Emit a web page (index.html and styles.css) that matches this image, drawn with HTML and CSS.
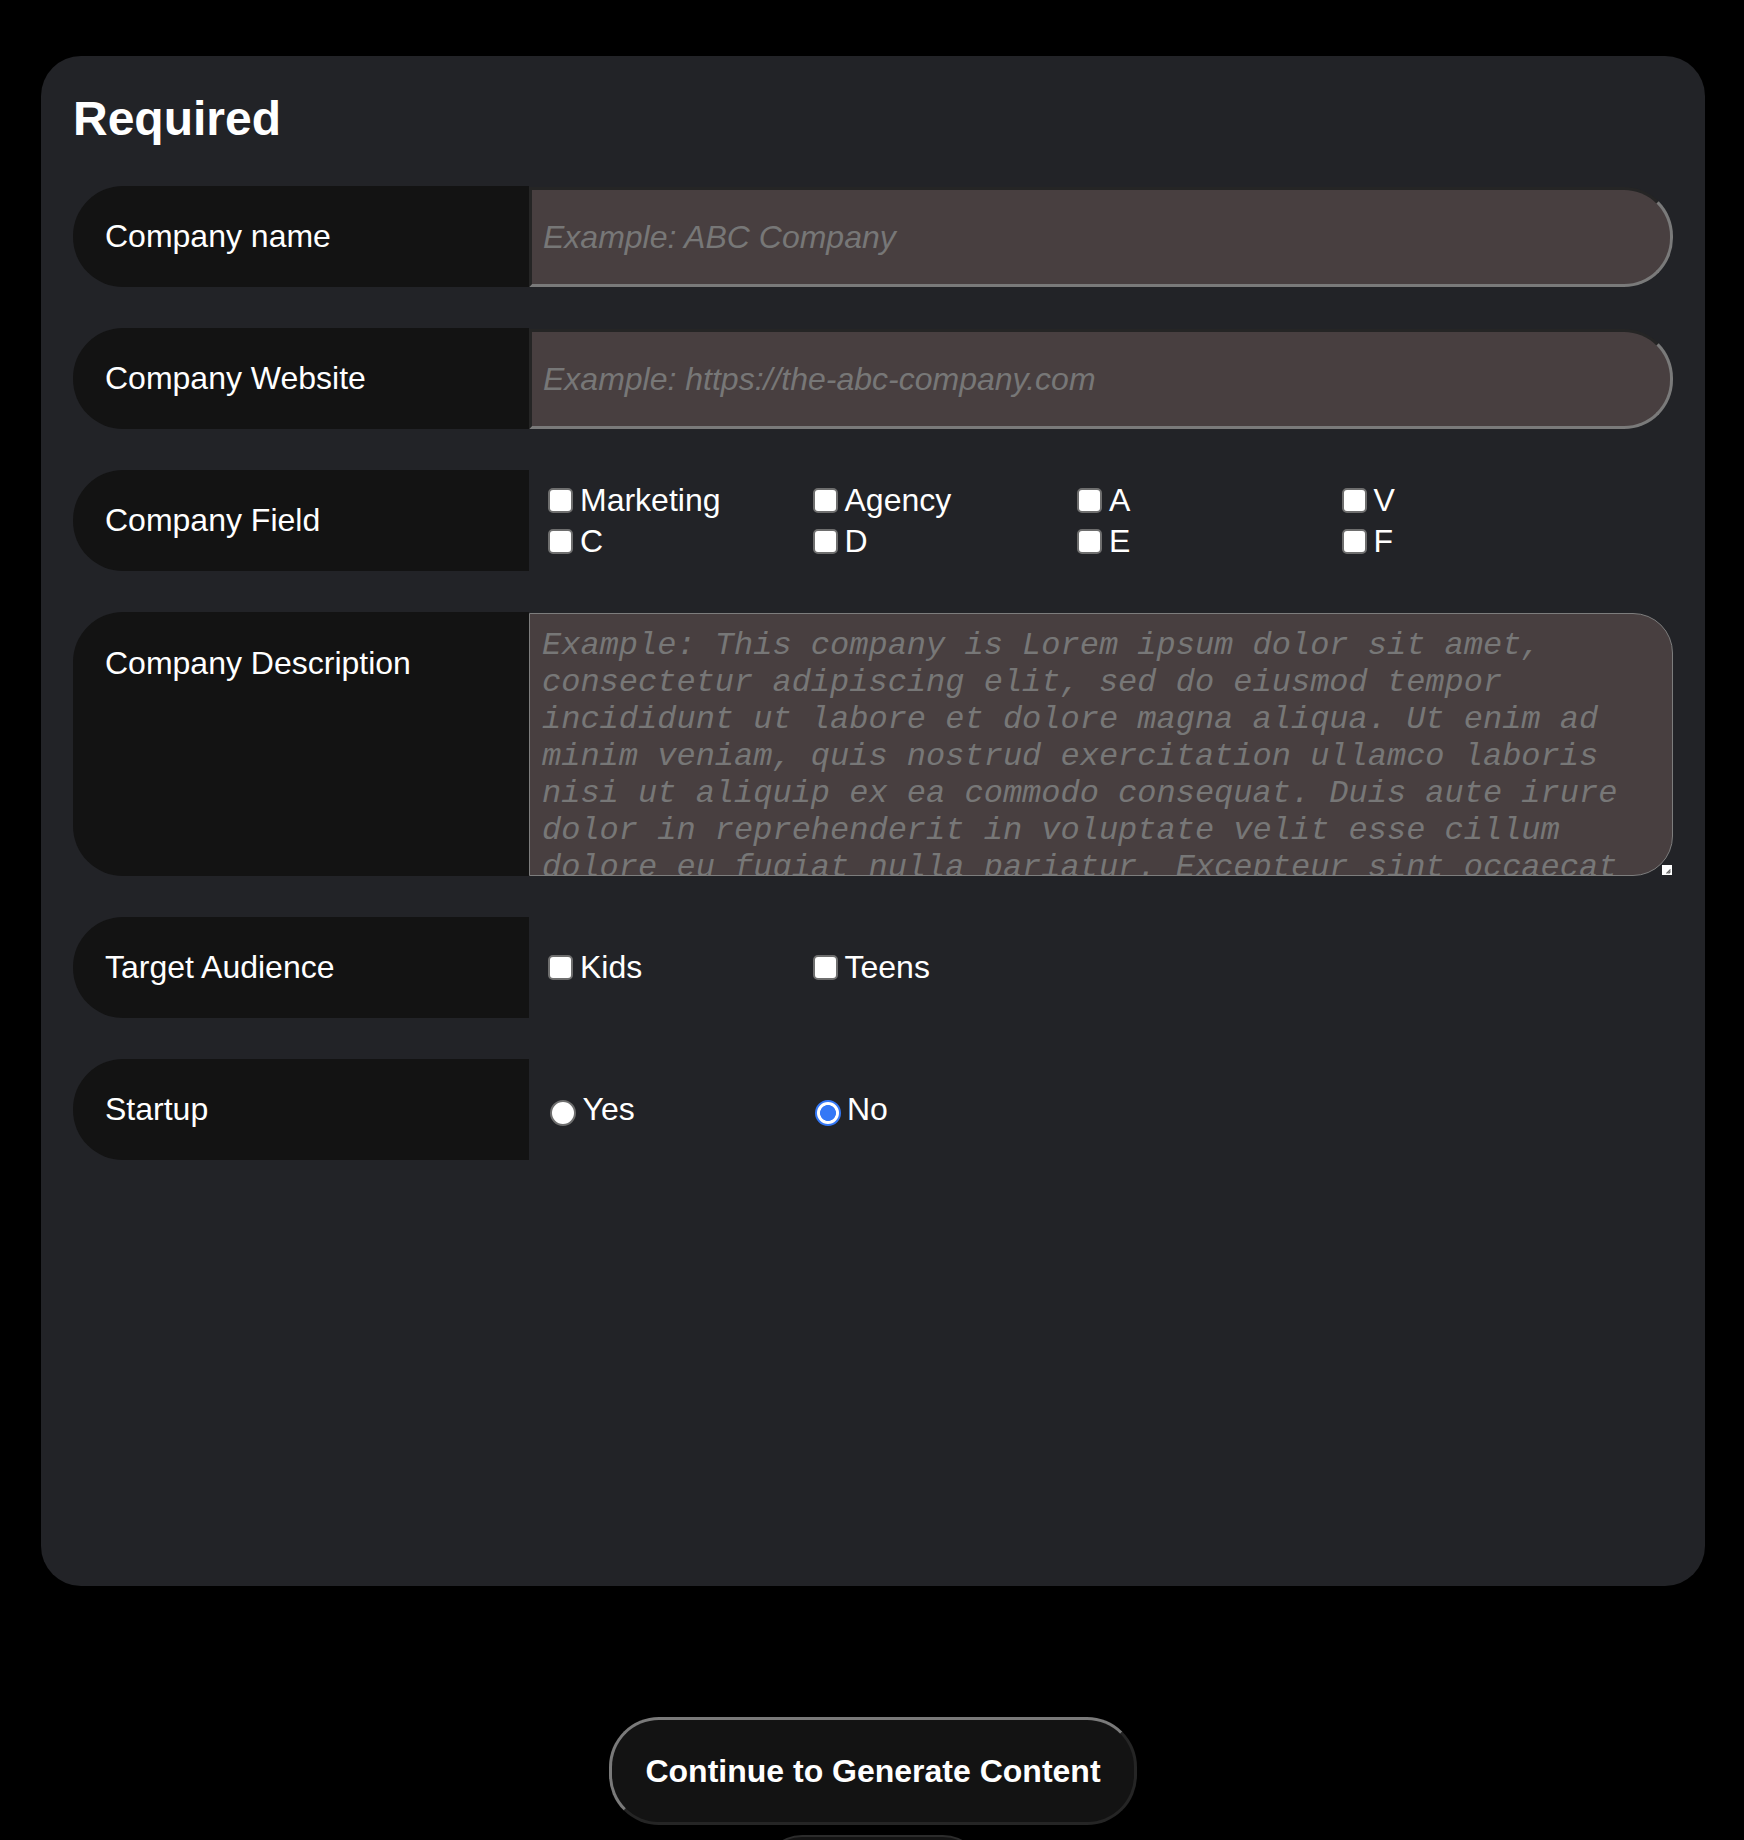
FILE: index.html
```html
<!DOCTYPE html>
<html lang="en">
<head>
<meta charset="utf-8">
<title>Required</title>
<link rel="stylesheet" href="styles.css">
</head>
<body>
<div class="page">
  <form class="panel">
    <h1 class="title">Required</h1>
    <div class="rows">
      <div class="row">
        <label class="label" for="cname">Company name</label>
        <input class="field" id="cname" type="text" placeholder="Example: ABC Company">
      </div>
      <div class="row">
        <label class="label" for="cweb">Company Website</label>
        <input class="field" id="cweb" type="text" placeholder="Example: https://the-abc-company.com">
      </div>
      <div class="row">
        <div class="label">Company Field</div>
        <div class="options">
          <label class="opt"><input class="check" type="checkbox"><span>Marketing</span></label>
          <label class="opt"><input class="check" type="checkbox"><span>Agency</span></label>
          <label class="opt"><input class="check" type="checkbox"><span>A</span></label>
          <label class="opt"><input class="check" type="checkbox"><span>V</span></label>
          <label class="opt"><input class="check" type="checkbox"><span>C</span></label>
          <label class="opt"><input class="check" type="checkbox"><span>D</span></label>
          <label class="opt"><input class="check" type="checkbox"><span>E</span></label>
          <label class="opt"><input class="check" type="checkbox"><span>F</span></label>
        </div>
      </div>
      <div class="row">
        <label class="label label-tall" for="cdesc">Company Description</label>
        <div class="area-wrap">
          <textarea class="area" id="cdesc" placeholder="Example: This company is Lorem ipsum dolor sit amet, consectetur adipiscing elit, sed do eiusmod tempor incididunt ut labore et dolore magna aliqua. Ut enim ad minim veniam, quis nostrud exercitation ullamco laboris nisi ut aliquip ex ea commodo consequat. Duis aute irure dolor in reprehenderit in voluptate velit esse cillum dolore eu fugiat nulla pariatur. Excepteur sint occaecat cupidatat non proident, sunt in culpa qui officia deserunt mollit anim id est laborum."></textarea>
          <span class="resizer"><svg width="10" height="10" viewBox="0 0 10 10"><path d="M8.5 4.5 L4.5 8.5 M8.5 6.5 L6.5 8.5" stroke="#6a6a6a" stroke-width="1.2" fill="none"/></svg></span>
        </div>
      </div>
      <div class="row">
        <div class="label">Target Audience</div>
        <div class="options">
          <label class="opt"><input class="check" type="checkbox"><span>Kids</span></label>
          <label class="opt"><input class="check" type="checkbox"><span>Teens</span></label>
        </div>
      </div>
      <div class="row">
        <div class="label">Startup</div>
        <div class="options">
          <label class="opt"><input class="radio" type="radio" name="startup"><span>Yes</span></label>
          <label class="opt"><input class="radio" type="radio" name="startup" checked><span>No</span></label>
        </div>
      </div>
    </div>
  </form>
  <div class="actions">
    <button class="continue" type="button">Continue to Generate Content</button>
    <div class="next-stub"></div>
  </div>
</div>
</body>
</html>
```

FILE: styles.css
```css
html, body {
  margin: 0;
  padding: 0;
  background: #000;
}
body {
  height: 1840px;
  overflow: hidden;
  font-family: "Liberation Sans", Arial, Helvetica, sans-serif;
  color: #fff;
}
.page {
  display: flex;
  flex-direction: column;
  align-items: center;
  padding-top: 56px;
}
.panel {
  box-sizing: border-box;
  width: 1664px;
  height: 1530px;
  margin-left: 2px;
  background: #222327;
  border-radius: 40px;
  padding: 35px 32px 0 32px;
}
.title {
  margin: 0 0 40px 0;
  font-size: 48px;
  font-weight: 700;
  line-height: normal;
  color: #fff;
}
.rows {
  display: flex;
  flex-direction: column;
  gap: 41px;
}
.row {
  display: flex;
  align-items: flex-end;
}
.label {
  box-sizing: border-box;
  flex: 0 0 456px;
  height: 101px;
  padding: 32px;
  background: #131313;
  border-radius: 50px 0 0 50px;
  font-size: 32px;
  line-height: normal;
  color: #fff;
}
.label-tall {
  height: 264px;
  padding-top: 33px;
}
.field {
  box-sizing: border-box;
  width: 1144px;
  height: 100px;
  margin: 0;
  padding: 0 11px;
  background: #483f40;
  border: 3px inset #7a7a7a;
  border-radius: 0 49px 49px 0;
  font-family: "Liberation Sans", Arial, sans-serif;
  font-size: 32px;
  color: #ddd;
  outline: none;
}
.field::placeholder,
.area::placeholder {
  color: #777;
  font-style: italic;
  opacity: 1;
}
.options {
  box-sizing: border-box;
  width: 1144px;
  align-self: center;
  display: grid;
  grid-template-columns: repeat(4, 264.5px);
  grid-auto-rows: 41px;
  padding-left: 11px;
}
.opt {
  display: flex;
  align-items: center;
  font-size: 32px;
  line-height: normal;
  color: #fff;
}
.check {
  appearance: none;
  -webkit-appearance: none;
  box-sizing: border-box;
  width: 25px;
  height: 25px;
  margin: 0 7px 0 8px;
  background: #fff;
  border: 2px solid #6e6e6e;
  border-radius: 5px;
  flex: none;
}
.radio {
  appearance: none;
  -webkit-appearance: none;
  box-sizing: border-box;
  width: 26px;
  height: 26px;
  margin: 6px 6.5px 0 10px;
  background: #fff;
  border: 2px solid #6e6e6e;
  border-radius: 50%;
  flex: none;
}
.radio:checked {
  border: 2.5px solid #3478f6;
  background: radial-gradient(circle, #3478f6 0, #3478f6 7.6px, #fff 8.3px);
}
.area-wrap {
  position: relative;
  width: 1144px;
  height: 263.5px;
}
.area {
  box-sizing: border-box;
  display: block;
  width: 100%;
  height: 100%;
  margin: 0;
  padding: 13px 12px 0 12px;
  background: #483f40;
  border: 1px solid #7d7d7d;
  border-radius: 0 40px 40px 0;
  font-family: "Liberation Mono", "Courier New", monospace;
  font-size: 32px;
  line-height: normal;
  color: #ddd;
  resize: none;
  overflow: hidden;
  outline: none;
}
.resizer {
  position: absolute;
  right: 1.5px;
  bottom: 1.5px;
  width: 10px;
  height: 10px;
  background: #fff;
  display: block;
}
.resizer svg {
  display: block;
}
.actions {
  display: flex;
  flex-direction: column;
  align-items: center;
  margin-top: 131px;
  margin-left: 2px;
}
.continue {
  box-sizing: border-box;
  height: 108px;
  padding: 0 33px;
  background: #131313;
  border: 3px outset #7a7a7a;
  border-radius: 50px;
  font-family: "Liberation Sans", Arial, sans-serif;
  font-size: 32px;
  font-weight: 700;
  color: #fff;
  cursor: pointer;
}
.next-stub {
  margin-top: 10px;
  width: 221px;
  height: 80px;
  background: #141414;
  border-top: 2px solid #2c2c2c;
  border-radius: 40px;
}
```
